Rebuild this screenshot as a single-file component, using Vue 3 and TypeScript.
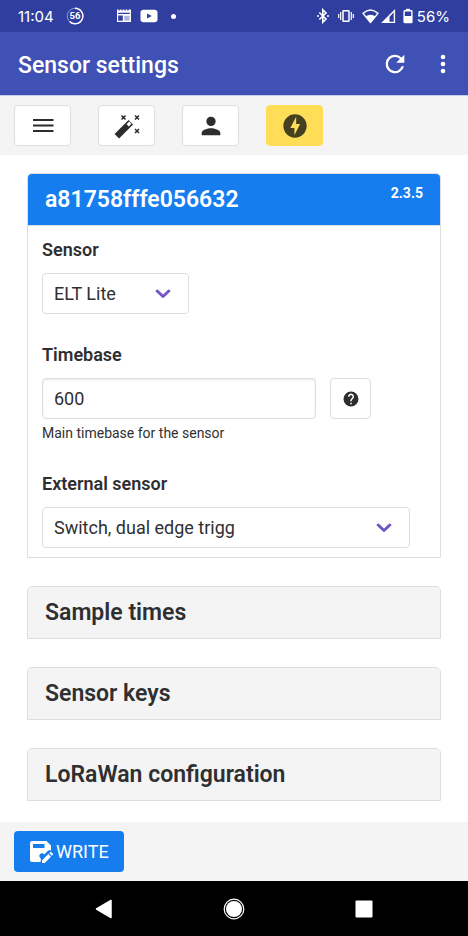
<script setup lang="ts">
import { ref } from 'vue'

const sensor = ref('ELT Lite')
const timebase = ref('600')
const external = ref('Switch, dual edge trigg')
const sections: string[] = ['Sample times', 'Sensor keys', 'LoRaWan configuration']
</script>

<template>
  <div class="screen">
    <div class="status">
      <div class="status-group">
        <span class="clock">11:04</span>
        <svg class="speed" width="18" height="18" viewBox="0 0 18 18">
          <circle cx="9" cy="9" r="7.8" fill="none" stroke="#8f98d4" stroke-width="1" />
          <path d="M9 1.2a7.8 7.8 0 1 1-5.5 13.3" fill="none" stroke="#fff" stroke-width="1.4" />
          <text x="9" y="12.4" text-anchor="middle" font-size="9.5" font-weight="700" fill="#fff">56</text>
        </svg>
        <svg class="news" width="16" height="14" viewBox="0 0 16 14">
          <path d="M1 .5h1.6v1h1.3v-1h1.6v1h1.3v-1h1.6v1h1.3v-1h1.6v1h1.3v-1H15V13H1z" fill="#fff" />
          <path d="M2.2 3.800h11.600v1.200H2.200zM2.200 6.400h4.600v5.400H2.200z" fill="#303f9f" />
          <path d="M8.200 6.800h5.400v4.800H8.200z" fill="#aeb5df" />
        </svg>
        <svg width="18" height="14" viewBox="0 0 18 14">
          <rect x="0.5" y="0.8" width="17" height="12.4" rx="3" fill="#fff" />
          <path d="M7 4.400v5.200L11.800 7z" fill="#303f9f" />
        </svg>
        <i class="dot"></i>
      </div>
      <div class="status-group">
        <svg width="14" height="16" viewBox="0 0 14 16">
          <path d="M3.300 4.500 10 11l-3.200 3.200V1.800L10 5l-6.700 6.500" fill="none" stroke="#fff" stroke-width="1.600" />
          <circle cx="2" cy="8" r="1" fill="#fff" /><circle cx="12" cy="8" r="1" fill="#fff" />
        </svg>
        <svg class="vibrate" width="16" height="14" viewBox="0 0 16 14">
          <rect x="5" y="1.700" width="6" height="10.600" rx="0.600" fill="none" stroke="#fff" stroke-width="1.500" />
          <path d="M2.700 3v8M13.300 3v8M.700 5v4M15.300 5v4" stroke="#fff" stroke-width="1.200" />
        </svg>
        <svg width="17" height="15" viewBox="0 0 17 15">
          <path d="M1 4.400q7.500-6.600 15 0L8.500 13.500z" fill="none" stroke="#fff" stroke-width="1.400" stroke-linejoin="round" />
          <path d="M3.500 7.200q5-3 10 0l-5 6.500z" fill="#fff" />
        </svg>
        <svg class="signal" width="15" height="15" viewBox="0 0 15 15">
          <path d="M1.800 13.400h11.600V1.800z" fill="none" stroke="#fff" stroke-width="1.400" />
          <path d="M1 14l7.500-7.500V14z" fill="#fff" />
        </svg>
        <svg class="battery" width="10" height="16" viewBox="0 0 10 16">
          <path d="M3 .8h4v2H3z" fill="#fff" />
          <rect x="1.100" y="2.700" width="7.800" height="11.800" rx="0.600" fill="none" stroke="#fff" stroke-width="1.400" />
          <path d="M1 8h8v6.500H1z" fill="#fff" />
        </svg>
        <span class="percent">56%</span>
      </div>
    </div>

    <header class="appbar">
      <h1>Sensor settings</h1>
      <button type="button" class="bare" aria-label="Refresh">
        <svg width="28" height="28" viewBox="0 0 24 24">
          <path fill="#fff" d="M17.650 6.350A7.950 7.950 0 0 0 12 4a8 8 0 1 0 7.730 10h-2.080A6 6 0 1 1 12 6c1.660 0 3.140.690 4.220 1.780L13 11h7V4z" />
        </svg>
      </button>
      <button type="button" class="bare more" aria-label="More options">
        <svg width="28" height="28" viewBox="0 0 24 24" fill="#fff">
          <circle cx="12" cy="6" r="2" /><circle cx="12" cy="12" r="2" /><circle cx="12" cy="18" r="2" />
        </svg>
      </button>
    </header>

    <nav class="toolbar" aria-label="Tools">
      <button type="button" class="tool" aria-label="Menu">
        <svg width="28" height="28" viewBox="0 0 28 28">
          <path d="M4 8h20.500M4 13.500h20.500M4 19h20.500" stroke="#2d2d2f" stroke-width="2.200" />
        </svg>
      </button>
      <button type="button" class="tool" aria-label="Auto fill">
        <svg width="28" height="28" viewBox="0 0 28 28">
          <path d="M3.800 24.200 17.800 10.200" stroke="#2d2d2f" stroke-width="6.400" />
          <path d="m14.700 13.300 2.600-2.600" stroke="#fff" stroke-width="3.200" />
          <path d="m8.500 3.500 4 4m0-4-4 4M22 3.500l4 4m0-4-4 4M22 17l4 4m0-4-4 4" stroke="#2d2d2f" stroke-width="1.500" />
          <path d="M9.500 4.500h2v2h-2zM23 4.500h2v2h-2zM23 18h2v2h-2z" fill="#2d2d2f" />
        </svg>
      </button>
      <button type="button" class="tool" aria-label="User">
        <svg width="28" height="28" viewBox="0 0 24 24">
          <path fill="#2d2d2f" d="M12 12a4 4 0 1 0 0-8 4 4 0 0 0 0 8zm0 2c-2.670 0-8 1.340-8 4v2h16v-2c0-2.660-5.330-4-8-4z" />
        </svg>
      </button>
      <button type="button" class="tool active" aria-label="Power">
        <svg width="28" height="28" viewBox="0 0 24 24">
          <path fill="#45401f" d="M12 2.020a9.980 9.980 0 1 0 0 19.960 9.980 9.980 0 0 0 0-19.960zM11.480 20v-6.260H8L13 4v6.260h3.350z" />
        </svg>
      </button>
    </nav>

    <main>
      <section class="panel">
        <header class="panel-head primary">
          <h2>a81758fffe056632</h2>
          <span class="version">2.3.5</span>
        </header>
        <form class="panel-body" @submit.prevent>
          <div class="field">
            <label for="sensor">Sensor</label>
            <div class="select small">
              <select id="sensor" v-model="sensor"><option>ELT Lite</option></select>
              <svg width="16" height="10" viewBox="0 0 16 10"><path d="m2.200 2 5.800 5.500L13.800 2" /></svg>
            </div>
          </div>
          <div class="field">
            <label for="timebase">Timebase</label>
            <div class="row">
              <input id="timebase" v-model="timebase" type="text" inputmode="numeric" aria-describedby="timebase-hint" />
              <button type="button" class="help" aria-label="Help">
                <svg width="18" height="18" viewBox="0 0 24 24">
                  <path fill="#2d2d2f" d="M12 2a10 10 0 1 0 0 20 10 10 0 0 0 0-20zm1 17h-2v-2h2zm2.070-7.750-.900.920C13.450 12.900 13 13.500 13 15h-2v-.500c0-1.100.450-2.100 1.170-2.830l1.240-1.260A2 2 0 1 0 10 9H8a4 4 0 1 1 7.070 2.250z" />
                </svg>
              </button>
            </div>
            <p id="timebase-hint" class="hint">Main timebase for the sensor</p>
          </div>
          <div class="field">
            <label for="external">External sensor</label>
            <div class="select">
              <select id="external" v-model="external"><option>Switch, dual edge trigg</option></select>
              <svg width="16" height="10" viewBox="0 0 16 10"><path d="m2.200 2 5.800 5.500L13.800 2" /></svg>
            </div>
          </div>
        </form>
      </section>
      <section v-for="title in sections" :key="title" class="panel">
        <header class="panel-head"><h2>{{ title }}</h2></header>
      </section>
    </main>

    <footer class="actions">
      <button type="button" class="write">
        <svg width="24" height="24" viewBox="0 0 24 24">
          <path fill="#fff" d="M3 1h14.500L22 5.500v5.200c-1.500-.700-2.800-.200-3.800.800l-3 3c-.900-1.600-3-1.700-4.200-.300-1.700 2 .200 3.700 1 4.800l-.500 3H3a2 2 0 0 1-2-2V3a2 2 0 0 1 2-2z" />
          <path fill="#167dee" d="M4 4h11.500v4H4z" />
          <path fill="#fff" d="m13 20.400 6.300-6.300 2.700 2.700-6.300 6.300H13zM20.200 13.200l.900-.900q.700-.700 1.400 0l1.200 1.200q.600.700 0 1.400l-.900.900z" />
        </svg>
        <span>WRITE</span>
      </button>
    </footer>

    <nav class="system" aria-label="System">
      <button type="button" class="bare" aria-label="Back">
        <svg width="22" height="22" viewBox="0 0 22 22"><path d="M3.500 11 18 2.500v17z" fill="#fff" stroke="#fff" stroke-width="1.500" stroke-linejoin="round" /></svg>
      </button>
      <button type="button" class="bare" aria-label="Home">
        <svg width="22" height="22" viewBox="0 0 22 22"><circle cx="11" cy="11" r="9.800" fill="none" stroke="#fff" stroke-width="1.200" /><circle cx="11" cy="11" r="8" fill="#fff" /></svg>
      </button>
      <button type="button" class="bare" aria-label="Recent apps">
        <svg width="22" height="22" viewBox="0 0 22 22"><rect x="2.500" y="2.500" width="17" height="17" rx="1" fill="#fff" /></svg>
      </button>
    </nav>
  </div>
</template>

<style>
body {
  margin: 0;
  background: #fff;
}
</style>

<style scoped>
.screen {
  display: flex;
  flex-direction: column;
  min-height: 100vh;
  color: #2f2f31;
  font-family: Roboto, sans-serif;
  font-size: 18px;
}
.screen *, .screen {
  box-sizing: border-box;
}
svg {
  display: block;
  flex: none;
}
h1, h2, p {
  margin: 0;
}
button, select, input {
  font: inherit;
  color: inherit;
}
button {
  display: flex;
  align-items: center;
  justify-content: center;
  padding: 0;
  cursor: pointer;
}
.bare {
  border: 0;
  background: none;
}
.status {
  display: flex;
  align-items: center;
  justify-content: space-between;
  height: 32px;
  padding: 0 18px;
  background: #303f9f;
  color: #fff;
}
.status-group {
  display: flex;
  align-items: center;
}
.clock, .percent {
  font-family: Inter, sans-serif;
  font-size: 15px;
}
.percent {
  margin-left: 4px;
}
.speed {
  margin-left: 12px;
}
.news {
  margin: 0 8px 0 32px;
}
.dot {
  width: 5px;
  height: 5px;
  margin-left: 13px;
  border-radius: 50%;
  background: #fff;
}
.vibrate {
  margin: 0 8px;
}
.signal {
  margin-left: 2px;
}
.battery {
  margin-left: 7px;
}
.appbar {
  display: flex;
  align-items: center;
  height: 63px;
  padding: 0 11px 0 18px;
  background: #3f51b5;
  color: #fff;
}
.appbar h1 {
  flex: 1;
  padding-top: 3px;
  font-size: 23px;
  font-weight: 500;
}
.more {
  margin-left: 20px;
}
.toolbar {
  display: flex;
  gap: 27px;
  height: 60px;
  padding: 9px 14px;
  border-top: 1px solid #c8cce6;
  background: #f4f4f4;
}
.tool {
  width: 57px;
  height: 41px;
  border: 1px solid #dedede;
  border-radius: 4px;
  background: #fff;
}
.tool.active {
  border-color: #ffdd57;
  background: #ffdd57;
}
main {
  display: flex;
  flex: 1;
  flex-direction: column;
  gap: 28px;
  padding: 18px 27px 21px;
}
.panel {
  border: 1px solid #dedede;
  border-radius: 5px 5px 0 0;
}
.panel-head {
  display: flex;
  justify-content: space-between;
  height: 51px;
  padding: 0 17px;
  border-radius: 4px 4px 0 0;
  background: #f4f4f4;
}
.panel-head h2 {
  font-size: 23px;
  font-weight: 600;
  line-height: 51px;
}
.primary {
  background: #167dee;
  color: #fff;
}
.version {
  font-size: 14px;
  font-weight: 700;
  line-height: 38px;
}
.panel-body {
  display: flex;
  flex-direction: column;
  gap: 28px;
  padding: 11px 30px 9px 14px;
  border-top: 1px solid #dedede;
}
label {
  display: block;
  margin-bottom: 10px;
  font-weight: 600;
  line-height: 26px;
}
.select {
  position: relative;
}
.small {
  width: 147px;
}
.select select, .row input {
  display: block;
  width: 100%;
  height: 41px;
  padding: 0 11px;
  border: 1px solid #dedede;
  border-radius: 4px;
  outline: 0;
  background: #fff;
  appearance: none;
}
.select svg {
  position: absolute;
  top: 16px;
  right: 18px;
  pointer-events: none;
}
.select path {
  fill: none;
  stroke: #7356c4;
  stroke-width: 3;
  stroke-linecap: round;
  stroke-linejoin: round;
}
.row {
  display: flex;
  gap: 14px;
  padding-right: 39px;
}
.row input {
  flex: 1;
  min-width: 0;
  box-shadow: inset 0 1px 2px rgba(10, 10, 10, 0.1);
}
.help {
  width: 41px;
  height: 41px;
  border: 1px solid #dedede;
  border-radius: 4px;
  background: #fff;
}
.hint {
  margin-top: 5px;
  font-size: 14px;
  line-height: 19px;
}
.actions {
  height: 59px;
  padding: 9px 14px;
  background: #f4f4f4;
}
.write {
  gap: 3px;
  height: 41px;
  padding: 0 15px;
  border: 0;
  border-radius: 4px;
  background: #167dee;
  color: #fff;
}
.system {
  display: flex;
  align-items: center;
  justify-content: center;
  gap: 108px;
  height: 55px;
  background: #000;
}
</style>
